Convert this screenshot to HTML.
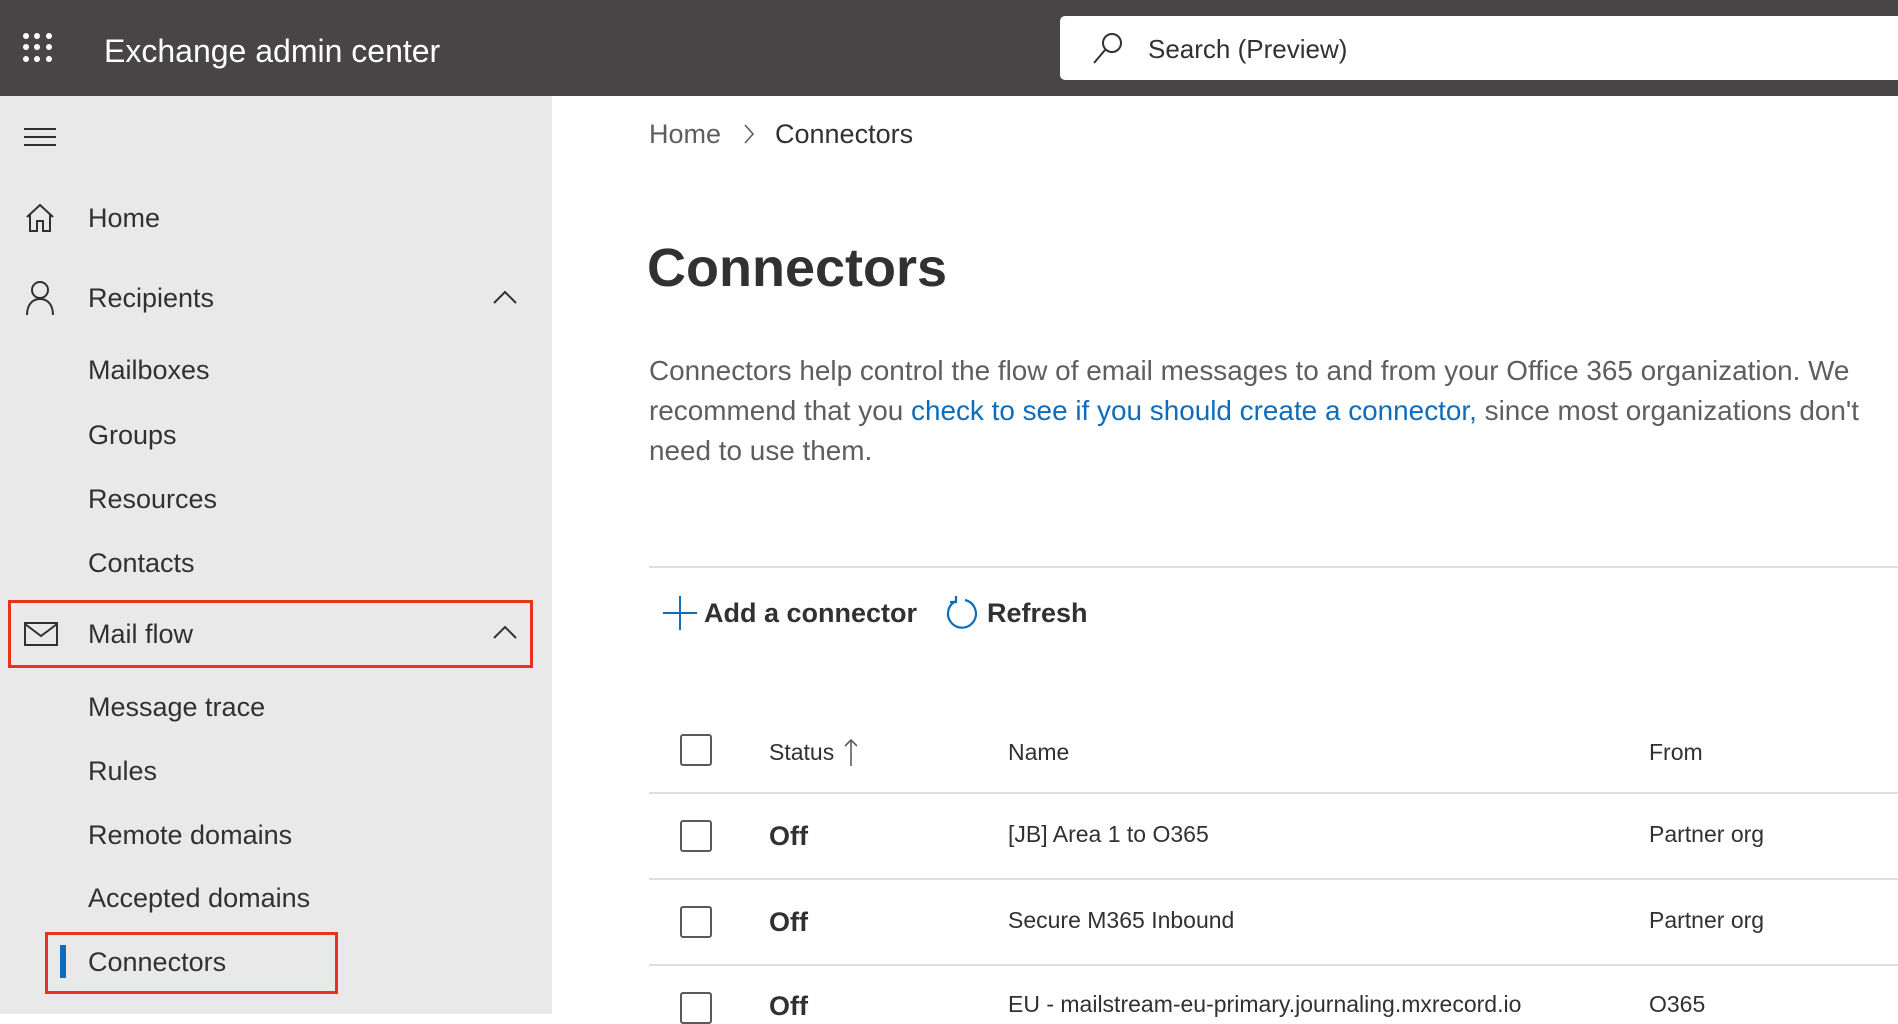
<!DOCTYPE html>
<html><head><meta charset="utf-8"><style>
*{margin:0;padding:0;box-sizing:border-box}
body{width:1898px;height:1014px;overflow:hidden;background:#fff;font-family:"Liberation Sans",sans-serif;color:#323130;position:relative}
.a{position:absolute;white-space:nowrap}
#top{position:absolute;left:0;top:0;width:1898px;height:96px;background:#474545}
#side{position:absolute;left:0;top:96px;width:552px;height:918px;background:#e9e9e9}
.nav{font-size:27px;color:#323130;line-height:32px}
.hl{position:absolute;height:1px;background:#e1dfdd;left:649px;width:1249px}
.cb{position:absolute;width:32px;height:32px;border:2px solid #5a5a5a;border-radius:3px;left:680px}
.t{font-size:23px;color:#323130;line-height:28px}
</style></head><body>
<div id="top"></div>
<svg class="a" style="left:22px;top:32px" width="34" height="34" viewBox="0 0 34 34" fill="#fff">
<circle cx="4" cy="4" r="3"/><circle cx="15" cy="4" r="3"/><circle cx="27" cy="4" r="3"/>
<circle cx="4" cy="15" r="3"/><circle cx="15" cy="15" r="3"/><circle cx="27" cy="15" r="3"/>
<circle cx="4" cy="27" r="3"/><circle cx="15" cy="27" r="3"/><circle cx="27" cy="27" r="3"/></svg>
<div class="a" style="left:104px;top:32px;font-size:32px;color:#fff;line-height:38px">Exchange admin center</div>
<div class="a" style="left:1060px;top:16px;width:850px;height:64px;background:#fff;border-radius:5px"></div>
<svg class="a" style="left:1090px;top:30px" width="36" height="36" viewBox="0 0 36 36" fill="none" stroke="#323130" stroke-width="2"><circle cx="22" cy="13" r="9"/><path d="M15 20 L4 33"/></svg>
<div class="a" style="left:1148px;top:34px;font-size:26px;color:#323130;line-height:30px">Search (Preview)</div>

<div id="side"></div>
<svg class="a" style="left:24px;top:128px" width="32" height="20"><path d="M0 1H32M0 9H32M0 17H32" stroke="#323130" stroke-width="2"/></svg>
<svg class="a" style="left:25px;top:203px" width="30" height="30" viewBox="0 0 30 30" fill="none" stroke="#323130" stroke-width="2"><path d="M2 14 L15 2 L28 14 M5 11 V28 H12 V18 H18 V28 H25 V11"/></svg>
<div class="a nav" style="left:88px;top:202px">Home</div>
<svg class="a" style="left:25px;top:280px" width="30" height="36" viewBox="0 0 30 36" fill="none" stroke="#323130" stroke-width="2"><circle cx="15" cy="10" r="8"/><path d="M2 35 C2 24 8 19 15 19 C22 19 28 24 28 35"/></svg>
<div class="a nav" style="left:88px;top:282px">Recipients</div>
<svg class="a" style="left:492px;top:289px" width="26" height="16"><path d="M2 14 L13 3 L24 14" fill="none" stroke="#323130" stroke-width="2"/></svg>
<div class="a nav" style="left:88px;top:354px">Mailboxes</div>
<div class="a nav" style="left:88px;top:419px">Groups</div>
<div class="a nav" style="left:88px;top:483px">Resources</div>
<div class="a nav" style="left:88px;top:547px">Contacts</div>
<div class="a" style="left:8px;top:600px;width:525px;height:68px;border:3px solid #e8321e"></div>
<svg class="a" style="left:24px;top:622px" width="34" height="24" viewBox="0 0 34 24" fill="none" stroke="#323130" stroke-width="2"><rect x="1" y="1" width="32" height="22"/><path d="M1 2 L17 14 L33 2"/></svg>
<div class="a nav" style="left:88px;top:618px">Mail flow</div>
<svg class="a" style="left:492px;top:624px" width="26" height="16"><path d="M2 14 L13 3 L24 14" fill="none" stroke="#323130" stroke-width="2"/></svg>
<div class="a nav" style="left:88px;top:691px">Message trace</div>
<div class="a nav" style="left:88px;top:755px">Rules</div>
<div class="a nav" style="left:88px;top:819px">Remote domains</div>
<div class="a nav" style="left:88px;top:882px">Accepted domains</div>
<div class="a" style="left:45px;top:932px;width:293px;height:62px;border:3px solid #e8321e"></div>
<div class="a" style="left:60px;top:945px;width:6px;height:33px;background:#0f6cbd"></div>
<div class="a nav" style="left:88px;top:946px">Connectors</div>

<div class="a" style="left:649px;top:118px;font-size:27px;color:#605e5c;line-height:32px">Home</div>
<svg class="a" style="left:742px;top:123px" width="14" height="22"><path d="M3 2 L11 11 L3 20" fill="none" stroke="#605e5c" stroke-width="1.6"/></svg>
<div class="a" style="left:775px;top:118px;font-size:27px;color:#323130;line-height:32px">Connectors</div>
<div class="a" style="left:647px;top:236px;font-size:54px;font-weight:bold;color:#323130;line-height:64px">Connectors</div>
<div class="a" style="left:649px;top:351px;font-size:27.9px;color:#605e5c;line-height:40px">Connectors help control the flow of email messages to and from your Office 365 organization. We<br>recommend that you <span style="color:#0f6cbd">check to see if you should create a connector,</span> since most organizations don't<br>need to use them.</div>
<div class="hl" style="top:566px;height:2px"></div>
<svg class="a" style="left:663px;top:596px" width="34" height="34"><path d="M17 0V34M0 17H34" stroke="#0f6cbd" stroke-width="2"/></svg>
<div class="a" style="left:704px;top:597px;font-size:27px;font-weight:bold;color:#323130;line-height:32px">Add a connector</div>
<svg class="a" style="left:944px;top:595px" width="36" height="36" viewBox="0 0 36 36" fill="none" stroke="#0f6cbd" stroke-width="2.2"><path d="M12 6 A14 14 0 1 0 21 5"/><path d="M12 1 V7 H6"/></svg>
<div class="a" style="left:987px;top:597px;font-size:27px;font-weight:bold;color:#323130;line-height:32px">Refresh</div>

<div class="cb" style="top:734px"></div>
<div class="a t" style="left:769px;top:738px">Status</div>
<svg class="a" style="left:844px;top:738px" width="14" height="28"><path d="M7 28V2M1 8L7 2L13 8" fill="none" stroke="#605e5c" stroke-width="1.6"/></svg>
<div class="a t" style="left:1008px;top:738px">Name</div>
<div class="a t" style="left:1649px;top:738px">From</div>
<div class="hl" style="top:792px;height:2px"></div>
<div class="cb" style="top:820px"></div>
<div class="a" style="left:769px;top:820px;font-size:27px;font-weight:bold;line-height:32px">Off</div>
<div class="a t" style="left:1008px;top:820px">[JB] Area 1 to O365</div>
<div class="a t" style="left:1649px;top:820px">Partner org</div>
<div class="hl" style="top:878px;height:2px"></div>
<div class="cb" style="top:906px"></div>
<div class="a" style="left:769px;top:906px;font-size:27px;font-weight:bold;line-height:32px">Off</div>
<div class="a t" style="left:1008px;top:906px">Secure M365 Inbound</div>
<div class="a t" style="left:1649px;top:906px">Partner org</div>
<div class="hl" style="top:964px;height:2px"></div>
<div class="cb" style="top:992px"></div>
<div class="a" style="left:769px;top:990px;font-size:27px;font-weight:bold;line-height:32px">Off</div>
<div class="a t" style="left:1008px;top:990px">EU - mailstream-eu-primary.journaling.mxrecord.io</div>
<div class="a t" style="left:1649px;top:990px">O365</div>
</body></html>
